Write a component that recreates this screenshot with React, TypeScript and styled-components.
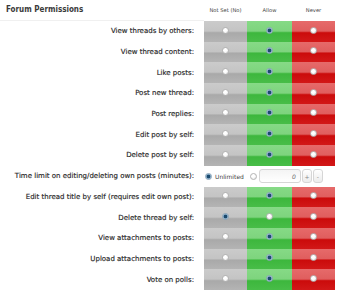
import React from "react";
import styled, { createGlobalStyle } from "styled-components";

const Global = createGlobalStyle`
  html, body { margin: 0; padding: 0; background: #ffffff; }
  body { font-family: "DejaVu Sans", Verdana, sans-serif; color: #333; }
`;

const Page = styled.div`
  width: 349px;
`;

const Grid = styled.div`
  display: grid;
  grid-template-columns: 204px 43px 45px 43px;
`;

const Title = styled.div`
  grid-column: 1;
  height: 21px;
  display: flex;
  align-items: center;
  padding-left: 6px;
  padding-bottom: 2px;
  font-family: "DejaVu Sans Condensed", "DejaVu Sans", sans-serif;
  font-stretch: condensed;
  font-size: 8px;
  font-weight: bold;
  color: #3a3a3a;
  border-bottom: 1px solid #f0f0f0;
  box-sizing: border-box;
`;

const ColHead = styled.div`
  height: 21px;
  display: flex;
  align-items: center;
  justify-content: center;
  font-size: 5.2px;
  color: #444;
  white-space: nowrap;
  padding-bottom: 2px;
  box-sizing: border-box;
`;

const Label = styled.div`
  grid-column: 1;
  height: 20.7px;
  display: flex;
  align-items: center;
  justify-content: flex-end;
  padding-right: 10px;
  font-size: 7px;
  font-weight: normal;
  color: #262626;
  white-space: nowrap;
  -webkit-text-stroke: 0.15px #262626;
`;

type Kind = "unset" | "allow" | "never";

const gradients: Record<Kind, string> = {
  unset:
    "linear-gradient(#cbcbcb 0%, #c4c4c4 48%, #a9a9a9 56%, #b4b4b4 100%)",
  allow:
    "linear-gradient(#86da86 0%, #7ed47e 48%, #3db73d 56%, #48bd48 100%)",
  never:
    "linear-gradient(#e66a6a 0%, #e05e5e 48%, #cb0b0b 56%, #d21818 100%)",
};

const Cell = styled.div<{ $kind: Kind }>`
  height: 20.7px;
  background: ${(p) => gradients[p.$kind]};
  display: flex;
  align-items: flex-start;
  justify-content: center;
  padding-top: 5.5px;
  box-sizing: border-box;
`;

const Radio = styled.span<{ $on?: boolean }>`
  width: 7px;
  height: 7px;
  border-radius: 50%;
  box-sizing: border-box;
  display: inline-block;
  flex: none;
  background: ${(p) =>
    p.$on
      ? "radial-gradient(circle, #1b4a6e 0 1.5px, #6f98b8 2px, #dfe9f1 3px)"
      : "radial-gradient(circle at 40% 35%, #ffffff 0 1.5px, #e8e8e8 3.5px)"};
  border: 0.6px solid ${(p) => (p.$on ? "#8aa5ba" : "#b4b4b4")};
`;

const TimeRow = styled.div`
  grid-column: 2 / span 3;
  height: 20.7px;
  display: flex;
  align-items: center;
  padding-left: 1px;
`;

const RadioLabel = styled.span`
  display: inline-flex;
  align-items: center;
  gap: 3px;
  font-size: 6px;
  color: #444;
  margin-right: 6px;
`;

const NumInput = styled.div`
  width: 42px;
  height: 14px;
  box-sizing: border-box;
  border: 1px solid #d6d6d6;
  border-radius: 3px;
  background: linear-gradient(#f4f4f4, #ffffff);
  margin-left: 2px;
  display: flex;
  align-items: center;
  justify-content: flex-end;
  padding-right: 4px;
  font-size: 6px;
  font-style: italic;
  color: #666;
`;

const Step = styled.div`
  width: 10px;
  height: 14px;
  box-sizing: border-box;
  border: 1px solid #d6d6d6;
  border-radius: 3px;
  background: linear-gradient(#ffffff, #ececec);
  display: flex;
  align-items: center;
  justify-content: center;
  font-size: 6px;
  color: #888;
  margin-left: 1px;
`;

type Perm = { label: string; value: Kind };

const before: Perm[] = [
  { label: "View threads by others:", value: "allow" },
  { label: "View thread content:", value: "allow" },
  { label: "Like posts:", value: "allow" },
  { label: "Post new thread:", value: "allow" },
  { label: "Post replies:", value: "allow" },
  { label: "Edit post by self:", value: "allow" },
  { label: "Delete post by self:", value: "allow" },
];

const after: Perm[] = [
  { label: "Edit thread title by self (requires edit own post):", value: "allow" },
  { label: "Delete thread by self:", value: "unset" },
  { label: "View attachments to posts:", value: "allow" },
  { label: "Upload attachments to posts:", value: "allow" },
  { label: "Vote on polls:", value: "allow" },
];

const kinds: Kind[] = ["unset", "allow", "never"];

function PermRow({ p }: { p: Perm }) {
  return (
    <>
      <Label>{p.label}</Label>
      {kinds.map((k) => (
        <Cell key={k} $kind={k}>
          <Radio $on={p.value === k} />
        </Cell>
      ))}
    </>
  );
}

export default function App() {
  return (
    <Page>
      <Global />
      <Grid>
        <Title>Forum Permissions</Title>
        <ColHead>Not Set (No)</ColHead>
        <ColHead>Allow</ColHead>
        <ColHead>Never</ColHead>
        {before.map((p) => (
          <PermRow key={p.label} p={p} />
        ))}
        <Label>Time limit on editing/deleting own posts (minutes):</Label>
        <TimeRow>
          <RadioLabel>
            <Radio $on />
            Unlimited
          </RadioLabel>
          <Radio />
          <NumInput>0</NumInput>
          <Step>+</Step>
          <Step>-</Step>
        </TimeRow>
        {after.map((p) => (
          <PermRow key={p.label} p={p} />
        ))}
      </Grid>
    </Page>
  );
}
